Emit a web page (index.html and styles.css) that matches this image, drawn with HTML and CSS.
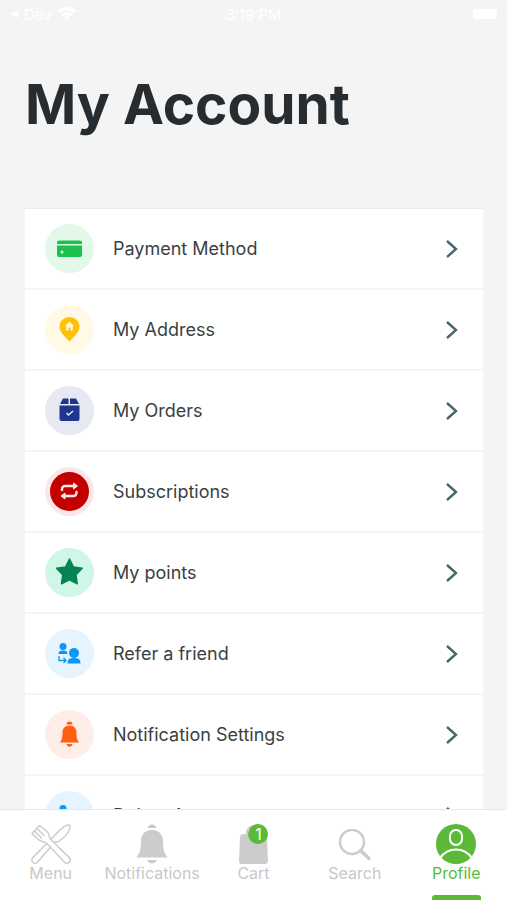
FILE: index.html
```html
<!DOCTYPE html>
<html lang="en">
<head>
<meta charset="utf-8">
<meta name="viewport" content="width=device-width, initial-scale=1">
<title>My Account</title>
<link rel="stylesheet" href="styles.css">
</head>
<body>
<div class="screen">
  <div class="status">
    <div class="status-left">
      <svg width="8" height="10" viewBox="0 0 8 10"><path d="M8 1v8L0 5z" fill="#fff"/></svg>
      <span>Dev</span>
      <svg width="18" height="14" viewBox="0 0 18 14" fill="none" stroke="#fff" stroke-width="3"><path d="M1 5a11 11 0 0 1 16 0M4 8.500a7 7 0 0 1 10 0"/><path d="M9 13L6.500 10.500a3.500 3.500 0 0 1 5 0z" fill="#fff" stroke="none"/></svg>
    </div>
    <span class="status-time">3:19 PM</span>
    <div class="status-right"><span class="battery"></span></div>
  </div>
  <main class="content">
    <h1 class="title">My Account</h1>
    <ul class="list">
      <li><a class="row" href="#payment">
        <span class="badge green"><svg viewBox="0 0 49 49"><path d="M12 18.500a2 2 0 0 1 2-2h21a2 2 0 0 1 2 2V20H12zM12 21.500h25V31a2 2 0 0 1-2 2H14a2 2 0 0 1-2-2z" fill="#1ac14b"/><circle cx="17" cy="28" r="1.500" fill="#e4f8ea"/></svg></span>
        <span class="label">Payment Method</span>
        <svg class="chevron" viewBox="0 0 12 20"><path d="M1 2l9 8-9 8"/></svg></a></li>
      <li><a class="row" href="#address">
        <span class="badge yellow"><svg viewBox="0 0 49 49"><path d="M24.500 36.500C20 31.500 14.500 27 14.500 21.500a10 9.500 0 0 1 20 0C34.500 27 29 31.500 24.500 36.500z" fill="#ffc107"/><path d="M24.500 16.500l4.500 4.500h-1.200v4.500h-2.300v-3h-2v3h-2.300V21H20z" fill="#fff9e6"/></svg></span>
        <span class="label">My Address</span>
        <svg class="chevron" viewBox="0 0 12 20"><path d="M1 2l9 8-9 8"/></svg></a></li>
      <li><a class="row" href="#orders">
        <span class="badge navy"><svg viewBox="0 0 49 49"><path d="M18 12.500h5.500V18H15zM25 12.500h6l3 5.500h-9zM14.500 19.500h20V33a2 2 0 0 1-2 2h-16a2 2 0 0 1-2-2z" fill="#20358c"/><path d="M21.500 27l2 2 4.500-4" fill="none" stroke="#e8ebf4" stroke-width="1.500"/></svg></span>
        <span class="label">My Orders</span>
        <svg class="chevron" viewBox="0 0 12 20"><path d="M1 2l9 8-9 8"/></svg></a></li>
      <li><a class="row" href="#subscriptions">
        <span class="badge red"><svg viewBox="0 0 49 49"><circle cx="24.500" cy="24.500" r="19.500" fill="#c20000"/><path d="M17 23v-1a3 3 0 0 1 3-3h9M31.500 25v1a3 3 0 0 1-3 3h-9" fill="none" stroke="#ffe4e6" stroke-width="2.400" stroke-linecap="round"/><path d="M28.500 16l4 3-4 3zM20 26L16 29l4 3z" fill="#ffe4e6" stroke="#ffe4e6" stroke-linejoin="round"/></svg></span>
        <span class="label">Subscriptions</span>
        <svg class="chevron" viewBox="0 0 12 20"><path d="M1 2l9 8-9 8"/></svg></a></li>
      <li><a class="row" href="#points">
        <span class="badge mint"><svg viewBox="0 0 49 49"><path d="M24.500 11l4 8 8.700 1.300-6.200 6.500 1.200 9-7.700-3.900-8 3.900 1.200-9-6.200-6.500 9-1.300z" fill="#078253" stroke="#078253" stroke-width="1.500" stroke-linejoin="round"/></svg></span>
        <span class="label">My points</span>
        <svg class="chevron" viewBox="0 0 12 20"><path d="M1 2l9 8-9 8"/></svg></a></li>
      <li><a class="row" href="#refer">
        <span class="badge blue"><svg viewBox="0 0 49 49"><g fill="#0c97f5"><circle cx="18" cy="17.500" r="3.500"/><path d="M13.500 25c0-3 2-3.500 4.500-3.500s4.500.5 4.500 3.500z"/><circle cx="29" cy="24" r="5"/><path d="M22.500 34.500c0-4.500 2.500-5.500 6.500-5.500s6.500 1 6.500 5.500z"/></g><path d="M14 27v4.500h6.500M18.500 29l2.500 2.500-2.500 2.500" fill="none" stroke="#0c97f5" stroke-width="1.300"/></svg></span>
        <span class="label">Refer a friend</span>
        <svg class="chevron" viewBox="0 0 12 20"><path d="M1 2l9 8-9 8"/></svg></a></li>
      <li><a class="row" href="#notification-settings">
        <span class="badge orange"><svg viewBox="0 0 49 49"><path d="M21.500 14.500a3 3 0 0 1 6 0zM24.500 15.500c4.500 0 7 3 7 7 0 5 .5 7 2.500 10H15c2-3 2.500-5 2.500-10 0-4 2.500-7 7-7zM21.500 34h6c-.5 3.500-5.500 3.500-6 0z" fill="#ff5e14"/></svg></span>
        <span class="label">Notification Settings</span>
        <svg class="chevron" viewBox="0 0 12 20"><path d="M1 2l9 8-9 8"/></svg></a></li>
      <li><a class="row" href="#delete">
        <span class="badge blue"><svg viewBox="0 0 49 49"><g fill="#0c97f5"><circle cx="18" cy="17.500" r="3.500"/><path d="M13.500 25c0-3 2-3.500 4.500-3.500s4.500.5 4.500 3.500z"/><circle cx="29" cy="24" r="5"/></g></svg></span>
        <span class="label">Delete Account</span>
        <svg class="chevron" viewBox="0 0 12 20"><path d="M1 2l9 8-9 8"/></svg></a></li>
    </ul>
  </main>
  <nav class="tabs">
    <a class="tab" href="#menu">
      <svg class="tab-icon" viewBox="0 0 40 40" fill="#fff" stroke="#ccc" stroke-width="1.500" stroke-linejoin="round" stroke-linecap="round"><path d="M1.800 38.200c-1.300-1.300-1.300-3.300 0-4.600L27 8c3-3 6.500-6.500 9.500-7 2-.3 2.800.8 2.500 2.500-.6 4-3.500 7.500-7 10.500l-5 4-2.500-.5L6.400 38.200a3.300 3.300 0 0 1-4.600 0z"/><path d="M1 9.500L8.500 1.500l8 6.500c1.800 1.800 1 4.500 3 7l18.700 18.600a3.200 3.200 0 0 1-4.600 4.600L15.500 19c-2.300-2-5.500-1.200-7.500-3z"/><path d="M3.500 7l7 7M6 4.500l7 7" fill="none"/></svg>
      <span>Menu</span></a>
    <a class="tab" href="#notifications">
      <svg class="tab-icon" viewBox="0 0 40 40" fill="#ccc"><path d="M15.500 4C16.200 1.500 18 .5 20 .5s3.800 1 4.500 3.500zM20 6c7.500 0 11 5 11 11.500 0 7.500 1 11 4.500 16h-31C8 28.500 9 25 9 17.500 9 11 12.500 6 20 6zM15 36h10c-.8 2.300-2.500 3.500-5 3.500S15.800 38.300 15 36z"/></svg>
      <span>Notifications</span></a>
    <a class="tab" href="#cart">
      <span class="cart">
      <svg class="tab-icon" viewBox="0 0 40 40"><path d="M10 10h20c3 0 4 1 4 4l1 23a3 3 0 0 1-3 3H9a3 3 0 0 1-3-3l1-23c0-3 1-4 3-4z" fill="#ccc"/><path d="M14 15V9c0-9 13-9 13 0" fill="none" stroke="#ccc" stroke-width="2"/></svg>
      <span class="count">1</span></span>
      <span>Cart</span></a>
    <a class="tab" href="#search">
      <svg class="tab-icon" viewBox="0 0 40 40" fill="none" stroke="#ccc"><circle cx="17" cy="18" r="12" stroke-width="2.500"/><path d="M25.500 26.500l8.500 8" stroke-width="3.500" stroke-linecap="round"/></svg>
      <span>Search</span></a>
    <a class="tab active" href="#profile" aria-current="page">
      <svg class="tab-icon" viewBox="0 0 40 40"><circle cx="20" cy="20" r="20" fill="#5aba38"/><rect x="14" y="6" width="12" height="15" rx="6" fill="none" stroke="#fff" stroke-width="2"/><path d="M4 34c4-5.500 9.500-8.500 16-8.500S32 28.500 36 34" fill="none" stroke="#fff" stroke-width="2.200"/></svg>
      <span>Profile</span></a>
  </nav>
</div>
</body>
</html>
```

FILE: styles.css
```css
* { box-sizing: border-box; }
body {
  margin: 0;
  background: #f4f4f4;
  color: #3b3f42;
  font-family: Inter, "Liberation Sans", sans-serif;
}
.screen {
  display: flex;
  flex-direction: column;
  height: 100vh;
}
.status {
  display: grid;
  grid-template-columns: 1fr auto 1fr;
  align-items: center;
  height: 28px;
  padding: 0 10px;
  color: #fff;
  font-size: 15px;
  flex: none;
}
.status-left { display: flex; align-items: center; gap: 6px; }
.status-right { display: flex; justify-content: flex-end; }
.battery { width: 24px; height: 10px; border-radius: 3px; background: #fff; }
.content {
  flex: 1;
  min-height: 0;
  overflow-y: auto;
  scrollbar-width: none;
}
.title {
  margin: 0;
  padding: 43px 25px 71px;
  color: #262c2f;
  font-size: 55px;
  line-height: 66px;
  font-weight: 700;
}
.list {
  margin: 0 24px 0 25px;
  padding: 0;
  list-style: none;
  display: grid;
  gap: 2px;
  border-top: 1px solid #ebebeb;
}
.row {
  display: flex;
  align-items: center;
  gap: 19px;
  height: 79px;
  padding: 0 25px 0 20px;
  background: #fff;
  color: inherit;
  text-decoration: none;
}
.badge { width: 49px; height: 49px; border-radius: 50%; flex: none; }
.badge svg { display: block; width: 100%; height: 100%; }
.green { background: #e4f8ea; }
.yellow { background: #fff9e6; }
.navy { background: #e6e9f2; }
.red { background: #fde6e8; }
.mint { background: #cff7e8; }
.blue { background: #e5f4ff; }
.orange { background: #ffeee8; }
.label { flex: 1; font-size: 18px; line-height: 24px; }
.chevron {
  width: 12px;
  height: 20px;
  fill: none;
  stroke: #48676a;
  stroke-width: 2.4;
}
.tabs {
  flex: none;
  display: grid;
  grid-template-columns: repeat(5, 1fr);
  height: 91px;
  background: #fff;
  border-top: 1px solid #e8e8e8;
}
.tab {
  position: relative;
  display: flex;
  flex-direction: column;
  align-items: center;
  padding-top: 14px;
  color: #c8c8c8;
  font-size: 16px;
  line-height: 18px;
  text-decoration: none;
}
.tab-icon { display: block; width: 40px; height: 40px; }
.active { color: #5aba38; }
.active::after {
  content: "";
  position: absolute;
  bottom: 0;
  width: 49px;
  height: 5px;
  border-radius: 3px 3px 0 0;
  background: #5aba38;
}
.cart { position: relative; }
.count {
  position: absolute;
  top: 0;
  right: 5px;
  width: 20px;
  height: 20px;
  border-radius: 50%;
  background: #5aba38;
  color: #fff;
  line-height: 20px;
  text-align: center;
}
```
